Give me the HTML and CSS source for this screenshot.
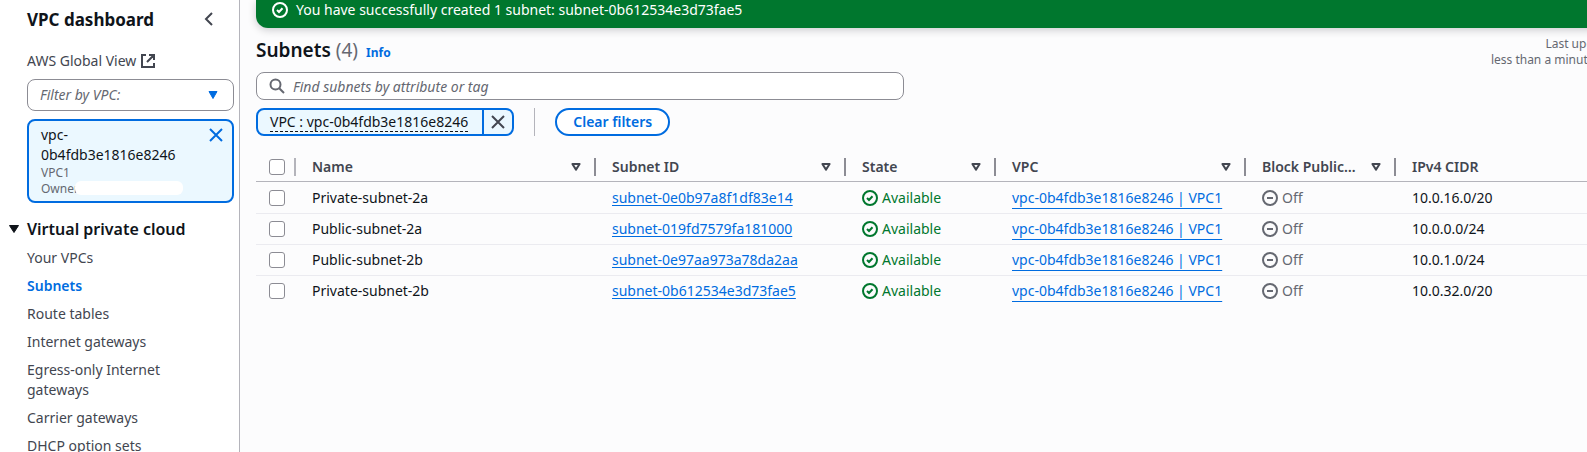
FILE: index.html
```html
<!DOCTYPE html>
<html lang="en">
<head>
<meta charset="utf-8">
<title>Subnets | VPC</title>
<link rel="stylesheet" href="styles.css">
</head>
<body>
<svg class="sprite" aria-hidden="true">
  <symbol id="check" viewBox="0 0 16 16"><circle cx="8" cy="8" r="7"/><path d="M5 8l2 2 3.5-3.8"/></symbol>
  <symbol id="off" viewBox="0 0 16 16"><circle cx="8" cy="8" r="7"/><path d="M5 8h6"/></symbol>
  <symbol id="close" viewBox="0 0 16 16"><path d="M2 2l12 12M14 2L2 14"/></symbol>
  <symbol id="sort" viewBox="0 0 10 8"><path d="M1.4 1h7.2L5 6.6z"/></symbol>
</svg>
<div class="app">
  <nav class="sidebar" aria-label="VPC">
    <div class="sidebar-head">
      <h2>VPC dashboard</h2>
      <button class="icon-btn" aria-label="Close navigation"><svg class="icon" viewBox="0 0 16 16"><path d="M11 2L5 8l6 6"/></svg></button>
    </div>
    <a class="global" href="#">AWS Global View
      <svg class="icon" viewBox="0 0 16 16"><path d="M6 2H2v12h12v-4M9 2h5v5M14 2L7 9"/></svg>
    </a>
    <div class="select">
      <select aria-label="Filter by VPC"><option>Filter by VPC:</option></select>
      <svg viewBox="0 0 10 8"><path d="M1 .5h8L5 7.500z"/></svg>
    </div>
    <div class="card">
      <div class="card-text">
        <div>vpc-<br>0b4fdb3e1816e8246</div>
        <div class="small">VPC1</div>
        <div class="small owner">Owner<span class="mask"></span></div>
      </div>
      <button class="icon-btn blue" aria-label="Remove VPC filter"><svg class="icon"><use href="#close"/></svg></button>
    </div>
    <button class="section"><svg viewBox="0 0 10 8"><path d="M.5 .5h9L5 7.500z"/></svg>Virtual private cloud</button>
    <ul class="links">
      <li><a href="#">Your VPCs</a></li>
      <li><a href="#" class="active" aria-current="page">Subnets</a></li>
      <li><a href="#">Route tables</a></li>
      <li><a href="#">Internet gateways</a></li>
      <li><a href="#">Egress-only Internet gateways</a></li>
      <li><a href="#">Carrier gateways</a></li>
      <li><a href="#">DHCP option sets</a></li>
    </ul>
  </nav>
  <main class="main">
    <div class="content">
      <div class="flash" role="status"><svg class="icon"><use href="#check"/></svg>You have successfully created 1 subnet: subnet-0b612534e3d73fae5</div>
      <header class="head">
        <div class="title"><h1>Subnets <span>(4)</span></h1><a href="#">Info</a></div>
        <div class="updated">Last updated<br>less than a minute ago</div>
      </header>
      <label class="search">
        <svg class="icon" viewBox="0 0 16 16"><circle cx="6.500" cy="6.500" r="5"/><path d="M10.200 10.200L15 15"/></svg>
        <input type="text" aria-label="Find subnets" placeholder="Find subnets by attribute or tag">
      </label>
      <div class="filters">
        <div class="token"><button class="token-label"><span>VPC : vpc-0b4fdb3e1816e8246</span></button><button class="token-x" aria-label="Remove filter"><svg class="icon"><use href="#close"/></svg></button></div>
        <div class="rule"></div>
        <button class="clear">Clear filters</button>
      </div>
      <table>
        <colgroup><col class="w-check"><col class="w-name"><col class="w-wide"><col class="w-slim"><col class="w-wide"><col class="w-slim"><col></colgroup>
        <thead>
          <tr>
            <th class="pick"><input type="checkbox" aria-label="Select all"></th>
            <th><div>Name<svg><use href="#sort"/></svg></div></th>
            <th><div>Subnet ID<svg><use href="#sort"/></svg></div></th>
            <th><div>State<svg><use href="#sort"/></svg></div></th>
            <th><div>VPC<svg><use href="#sort"/></svg></div></th>
            <th><div>Block Public…<svg><use href="#sort"/></svg></div></th>
            <th><div>IPv4 CIDR</div></th>
          </tr>
        </thead>
        <tbody>
          <tr><td class="pick"><input type="checkbox" aria-label="Select Private-subnet-2a"></td><td>Private-subnet-2a</td><td><a href="#">subnet-0e0b97a8f1df83e14</a></td><td><div class="status ok"><svg class="icon"><use href="#check"/></svg>Available</div></td><td><a class="low" href="#">vpc-0b4fdb3e1816e8246 | VPC1</a></td><td><div class="status"><svg class="icon"><use href="#off"/></svg>Off</div></td><td>10.0.16.0/20</td></tr>
          <tr><td class="pick"><input type="checkbox" aria-label="Select Public-subnet-2a"></td><td>Public-subnet-2a</td><td><a href="#">subnet-019fd7579fa181000</a></td><td><div class="status ok"><svg class="icon"><use href="#check"/></svg>Available</div></td><td><a class="low" href="#">vpc-0b4fdb3e1816e8246 | VPC1</a></td><td><div class="status"><svg class="icon"><use href="#off"/></svg>Off</div></td><td>10.0.0.0/24</td></tr>
          <tr><td class="pick"><input type="checkbox" aria-label="Select Public-subnet-2b"></td><td>Public-subnet-2b</td><td><a href="#">subnet-0e97aa973a78da2aa</a></td><td><div class="status ok"><svg class="icon"><use href="#check"/></svg>Available</div></td><td><a class="low" href="#">vpc-0b4fdb3e1816e8246 | VPC1</a></td><td><div class="status"><svg class="icon"><use href="#off"/></svg>Off</div></td><td>10.0.1.0/24</td></tr>
          <tr><td class="pick"><input type="checkbox" aria-label="Select Private-subnet-2b"></td><td>Private-subnet-2b</td><td><a href="#">subnet-0b612534e3d73fae5</a></td><td><div class="status ok"><svg class="icon"><use href="#check"/></svg>Available</div></td><td><a class="low" href="#">vpc-0b4fdb3e1816e8246 | VPC1</a></td><td><div class="status"><svg class="icon"><use href="#off"/></svg>Off</div></td><td>10.0.32.0/20</td></tr>
        </tbody>
      </table>
    </div>
  </main>
</div>
</body>
</html>
```
FILE: styles.css
```css
* { box-sizing: border-box; }
body {
  margin: 0;
  background: #fcfcfd;
  color: #0f141a;
  font: 14px/20px "Noto Sans", "Open Sans", sans-serif;
}
button, input, select { font: inherit; color: inherit; }
button { background: none; border: 0; padding: 0; cursor: pointer; }
h1, h2 { margin: 0; }
a { color: #006ce0; }
.sprite { position: absolute; width: 0; height: 0; }
.icon { width: 16px; height: 16px; flex: none; fill: none; stroke: currentColor; stroke-width: 2; }

.app { display: flex; height: 100vh; overflow: hidden; }

.sidebar {
  flex: none;
  width: 240px;
  padding: 8px 5px 0 27px;
  background: #fff;
  border-right: 1px solid #b4b4bb;
  overflow: hidden;
}
.sidebar-head { display: flex; justify-content: space-between; align-items: center; height: 24px; padding-right: 17px; }
.sidebar-head h2 { font-size: 17px; font-weight: 700; }
.sidebar-head .icon-btn { padding-bottom: 3px; }
.icon-btn { display: flex; color: #424650; }
.icon-btn.blue { color: #006ce0; }
.global { display: flex; align-items: center; gap: 4px; margin-top: 19px; color: #424650; text-decoration: none; }
.select { position: relative; margin-top: 8px; }
.select select {
  display: block;
  width: 100%;
  height: 32px;
  padding: 0 12px;
  appearance: none;
  background: #fff;
  border: 1px solid #8c8c94;
  border-radius: 8px;
  color: #656871;
  font-style: italic;
}
.select svg { position: absolute; right: 16px; top: 12px; width: 10px; height: 8px; fill: #006ce0; stroke: #006ce0; stroke-linejoin: round; pointer-events: none; }
.card {
  display: flex;
  justify-content: space-between;
  align-items: flex-start;
  margin-top: 8px;
  padding: 4px 8px 4px 12px;
  background: #ebf8ff;
  border: 2px solid #006ce0;
  border-radius: 8px;
}
.card .icon-btn { padding-top: 2px; }
.small { font-size: 12px; line-height: 16px; color: #656871; }
.owner { position: relative; }
.mask { position: absolute; left: 34px; top: 0; width: 108px; height: 14px; border-radius: 6px; background: #fff; }
.section { display: flex; align-items: center; gap: 8px; margin: 16px 0 0 -18px; font-size: 16px; font-weight: 600; }
.section svg { width: 10px; height: 8px; fill: currentColor; stroke: currentColor; stroke-linejoin: round; }
.links { display: grid; gap: 8px; margin: 9px 0 0; padding: 0 48px 0 0; list-style: none; }
.links a { display: block; color: #424650; text-decoration: none; }
.links .active { color: #006ce0; font-weight: 600; }

.main { flex: 1; min-width: 0; padding-left: 16px; overflow: hidden; }
.content { margin-right: -48px; }
.flash {
  display: flex;
  align-items: center;
  gap: 8px;
  padding: 0 16px 8px;
  background: #00772e;
  border-radius: 0 0 12px 12px;
  color: #fff;
  box-shadow: 0 2px 8px rgba(0, 7, 22, .2);
}
.head { display: flex; justify-content: space-between; padding: 8px 16px 4px 0; }
.title { display: flex; align-items: baseline; gap: 8px; }
h1 { font-size: 19px; line-height: 28px; font-weight: 600; }
h1 span { font-weight: 400; color: #656871; }
.title a { font-size: 12px; font-weight: 700; text-decoration: none; }
.updated { font-size: 12px; line-height: 16px; color: #656871; text-align: right; }
.search {
  display: flex;
  align-items: center;
  gap: 8px;
  width: 648px;
  height: 28px;
  padding: 0 12px;
  background: #fff;
  border: 1px solid #8c8c94;
  border-radius: 8px;
  color: #656871;
}
.search input { flex: 1; min-width: 0; padding: 1px 0 0; border: 0; outline: 0; background: none; }
.search input::placeholder { color: #656871; font-style: italic; opacity: 1; }
.filters { display: flex; gap: 20px; margin-top: 8px; }
.token { display: flex; height: 28px; background: #ebf8ff; border: 2px solid #006ce0; border-radius: 8px; }
.token-label { padding: 0 14px 0 12px; }
.token-label span { border-bottom: 1px dashed #0f141a; }
.token-x { display: flex; align-items: center; padding: 0 6px; border-left: 2px solid #006ce0; color: #424650; }
.rule { width: 1px; background: #b4b4bb; }
.clear { height: 28px; padding: 0 16px; background: #fff; border: 2px solid #006ce0; border-radius: 20px; color: #006ce0; font-weight: 600; }

table { width: 100%; margin-top: 16px; table-layout: fixed; border-collapse: separate; border-spacing: 0; }
.w-check { width: 40px; }
.w-name { width: 300px; }
.w-wide { width: 250px; }
.w-slim { width: 150px; }
th { padding: 0 0 5px; text-align: left; font-weight: 600; color: #424650; border-bottom: 1px solid #b4b4bb; }
th div { display: flex; align-items: center; justify-content: space-between; height: 18px; margin-top: 6px; padding: 0 13px 0 16px; border-right: 2px solid #8c8c94; line-height: 20px; }
th:last-child div { border: 0; }
th svg { width: 10px; height: 8px; fill: none; stroke: currentColor; stroke-width: 2; stroke-linejoin: round; }
td { height: 31px; padding: 0 0 0 16px; border-bottom: 1px solid #ebebf0; white-space: nowrap; }
tbody tr:first-child td { height: 32px; border-top: 1px solid transparent; }
tr:last-child td { border-bottom-color: transparent; }
.pick { padding-left: 13px; }
th.pick { padding-top: 6px; background: linear-gradient(#b4b4bb, #b4b4bb) right 6px / 2px 18px no-repeat; }
td a { text-underline-offset: 2px; text-decoration-skip-ink: none; }
td .low { text-underline-offset: 5px; }
.pick input { appearance: none; display: block; width: 16px; height: 16px; margin: 0; background: #fff; border: 1px solid #8c8c94; border-radius: 3px; }
.status { display: flex; align-items: center; gap: 4px; color: #656871; }
.status.ok { color: #00772e; }
```
